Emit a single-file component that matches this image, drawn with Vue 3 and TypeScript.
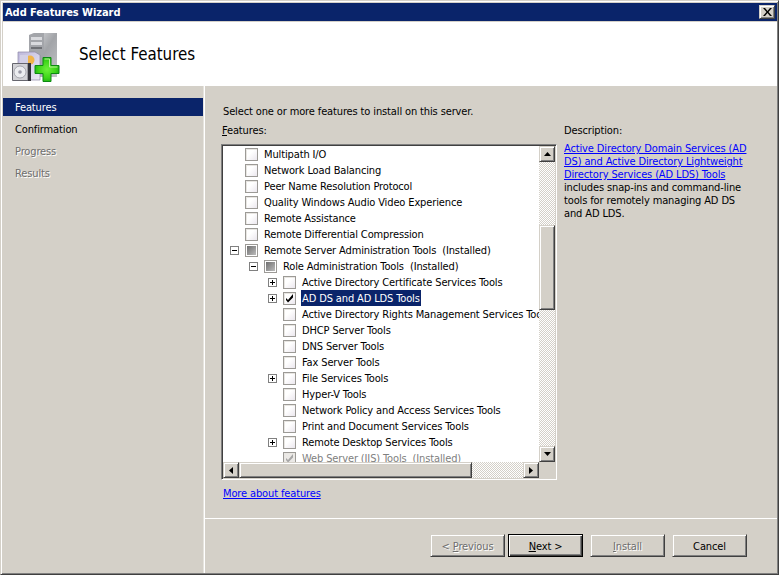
<script setup lang="ts">
interface Row {
  level: number;
  text: string;
  expander?: '+' | '-';
  state?: 'none' | 'mixed' | 'checked' | 'locked';
  selected?: boolean;
}
const rows: Row[] = [
  { level: 0, text: 'Multipath I/O' },
  { level: 0, text: 'Network Load Balancing' },
  { level: 0, text: 'Peer Name Resolution Protocol' },
  { level: 0, text: 'Quality Windows Audio Video Experience' },
  { level: 0, text: 'Remote Assistance' },
  { level: 0, text: 'Remote Differential Compression' },
  { level: 0, text: 'Remote Server Administration Tools  (Installed)', expander: '-', state: 'mixed' },
  { level: 1, text: 'Role Administration Tools  (Installed)', expander: '-', state: 'mixed' },
  { level: 2, text: 'Active Directory Certificate Services Tools', expander: '+' },
  { level: 2, text: 'AD DS and AD LDS Tools', expander: '+', state: 'checked', selected: true },
  { level: 2, text: 'Active Directory Rights Management Services Tools' },
  { level: 2, text: 'DHCP Server Tools' },
  { level: 2, text: 'DNS Server Tools' },
  { level: 2, text: 'Fax Server Tools' },
  { level: 2, text: 'File Services Tools', expander: '+' },
  { level: 2, text: 'Hyper-V Tools' },
  { level: 2, text: 'Network Policy and Access Services Tools' },
  { level: 2, text: 'Print and Document Services Tools' },
  { level: 2, text: 'Remote Desktop Services Tools', expander: '+' },
  { level: 2, text: 'Web Server (IIS) Tools  (Installed)', state: 'locked' },
];
const steps = [
  { name: 'Features', cls: 'active' },
  { name: 'Confirmation', cls: '' },
  { name: 'Progress', cls: 'off' },
  { name: 'Results', cls: 'off' },
];
</script>

<template>
  <div class="window">
    <div class="titlebar">
      <span class="title-text">Add Features Wizard</span>
      <button class="close raised" aria-label="Close">
        <svg width="9" height="8" viewBox="0 0 9 8"><path class="glyph" d="M0 0h2l2.500 3 2.500-3h2L5.500 4 9 8H7L4.500 5 2 8H0l3.500-4z" /></svg>
      </button>
    </div>
    <header class="banner">
      <svg class="logo" width="50" height="50" viewBox="0 0 50 50">
        <defs>
          <linearGradient id="srv" x1="0" x2="1" y1="0" y2="1">
            <stop offset="0" stop-color="#e4e5e8" />
            <stop offset="0.5" stop-color="#a2a4a8" />
            <stop offset="1" stop-color="#c4c5c8" />
          </linearGradient>
          <linearGradient id="box" x1="0" x2="1" y1="0" y2="1">
            <stop offset="0" stop-color="#bdb8dc" />
            <stop offset="1" stop-color="#ece9f4" />
          </linearGradient>
          <radialGradient id="plus" cx="0.5" cy="0.5" r="0.6">
            <stop offset="0" stop-color="#6cf03a" />
            <stop offset="0.6" stop-color="#3cd418" />
            <stop offset="1" stop-color="#16a414" />
          </radialGradient>
        </defs>
        <path d="M17 3l5-2h23v44H22l-5-3z" fill="url(#srv)" />
        <path d="M17 3l5-2h10v42H22l-5-3z" fill="#a3a5aa" />
        <path d="M19 5h11v3H19zM19 10h11v3H19z" fill="#d9dade" />
        <path d="M19 15h11v2H19z" fill="#6e7075" />
        <path d="M6 20h17l5 3v25H6z" fill="url(#box)" stroke="#8c88a8" stroke-width=".7" />
        <circle cx="18" cy="28" r="4.500" fill="#f0b54a" />
        <path d="M8 23h8v8H8z" fill="#d3d0e6" />
        <path d="M.5 31.500h15.500v17H.5z" fill="#d2d2d6" stroke="#66666e" />
        <path d="M16 31h3v18h-3z" fill="#33333a" />
        <circle cx="8" cy="40" r="6" fill="#ecedf0" stroke="#8d8d96" stroke-width=".7" />
        <circle cx="8" cy="40" r="1.800" fill="#9a9aa6" />
        <path d="M31 25.500h8v8h8v8h-8v8h-8v-8h-8v-8h8z" fill="url(#plus)" stroke="#0c8a12" />
        <path d="M32.500 27h5v8h8" fill="none" stroke="#b8f598" />
      </svg>
      <h1 class="banner-title">Select Features</h1>
    </header>
    <div class="body">
      <nav class="sidebar">
        <div v-for="s in steps" :key="s.name" class="step" :class="s.cls">{{ s.name }}</div>
      </nav>
      <main class="main">
        <div class="content">
          <div class="picker">
            <p class="lead">Select one or more features to install on this server.</p>
            <p class="caption"><u>F</u>eatures:</p>
            <div class="tree">
              <div class="rows">
                <div v-for="r in rows" :key="r.text" class="row" :style="{ paddingLeft: 7 + r.level * 19 + 'px' }">
                  <span class="exp-slot">
                    <span v-if="r.expander" class="expander">
                      <i class="h"></i><i v-if="r.expander === '+'" class="v"></i>
                    </span>
                  </span>
                  <span class="check" :class="r.state">
                    <svg v-if="r.state === 'checked' || r.state === 'locked'" width="9" height="9" viewBox="0 0 9 9">
                      <path d="M1 4l2 2L8 0v3.500L3 8.500 1 6z" />
                    </svg>
                  </span>
                  <span class="label" :class="{ selected: r.selected, locked: r.state === 'locked' }">{{ r.text }}</span>
                </div>
              </div>
              <div class="vbar">
                <button class="sb raised" aria-label="Up"><svg width="7" height="4" viewBox="0 0 7 4"><path class="glyph" d="M3.500 0L7 4H0z" /></svg></button>
                <div class="track track-top"></div>
                <div class="thumb-v raised"></div>
                <div class="track track-fill"></div>
                <button class="sb raised" aria-label="Down"><svg width="7" height="4" viewBox="0 0 7 4"><path class="glyph" d="M0 0h7L3.500 4z" /></svg></button>
              </div>
              <div class="hbar">
                <button class="sb raised" aria-label="Left"><svg width="4" height="7" viewBox="0 0 4 7"><path class="glyph" d="M4 0v7L0 3.500z" /></svg></button>
                <div class="thumb-h raised"></div>
                <div class="track track-fill"></div>
                <button class="sb raised" aria-label="Right"><svg width="4" height="7" viewBox="0 0 4 7"><path class="glyph" d="M0 0l4 3.500L0 7z" /></svg></button>
              </div>
              <div class="corner"></div>
            </div>
            <a class="link more" href="#">More about features</a>
          </div>
          <aside class="desc">
            <p class="desc-head">Description:</p>
            <p class="desc-text">
              <a class="link" href="#">Active Directory Domain Services (AD<br />DS) and Active Directory Lightweight<br />Directory Services (AD LDS) Tools</a><br />
              includes snap-ins and command-line<br />tools for remotely managing AD DS<br />and AD LDS.
            </p>
          </aside>
        </div>
        <footer class="footer">
          <button class="btn raised disabled"><span>&lt; <u>P</u>revious</span></button>
          <button class="btn raised default"><span><u>N</u>ext &gt;</span></button>
          <button class="btn raised disabled gap"><span><u>I</u>nstall</span></button>
          <button class="btn raised gap"><span>Cancel</span></button>
        </footer>
      </main>
    </div>
  </div>
</template>

<style>
html, body { margin: 0; background: #d4d0c8; }
</style>

<style scoped>
.window {
  box-sizing: border-box;
  width: 779px;
  height: 575px;
  display: flex;
  flex-direction: column;
  padding: 2px 1px 1px 2px;
  background: #d4d0c8;
  border: 1px solid;
  border-color: #d4d0c8 #404040 #404040 #d4d0c8;
  box-shadow: inset 1px 1px 0 #fff, inset -1px -1px 0 #808080;
  font: 11px "DejaVu Sans Condensed", "Liberation Sans", Arial, sans-serif;
  letter-spacing: -0.13px;
  color: #000;
  overflow: hidden;
}
p, h1 { margin: 0; font-weight: normal; }
button { font: inherit; letter-spacing: inherit; padding: 0; color: inherit; background: #d4d0c8; display: flex; align-items: center; justify-content: center; }
button span { padding-top: 1px; }
.raised {
  box-sizing: border-box;
  background: #d4d0c8;
  border: 1px solid;
  border-color: #d4d0c8 #404040 #404040 #d4d0c8;
  box-shadow: inset 1px 1px 0 #fff, inset -1px -1px 0 #808080;
}
.glyph { fill: #000; }
.titlebar {
  height: 18px;
  flex: none;
  background: #0a246a;
  display: flex;
  align-items: center;
  justify-content: space-between;
  padding: 0 2px;
  color: #fff;
  font-weight: bold;
  letter-spacing: -0.05px;
}
.close { width: 16px; height: 14px; }
.banner {
  flex: none;
  height: 64px;
  margin-top: 1px;
  background: #fff;
  display: flex;
  align-items: center;
}
.logo { margin: 5px 0 0 9px; flex: none; }
.banner-title { font-size: 16.800px; margin-left: 17px; letter-spacing: 0; }
.body { flex: 1; display: flex; min-height: 0; }
.sidebar {
  width: 200px;
  flex: none;
  padding-top: 12px;
  box-sizing: border-box;
  display: flex;
  flex-direction: column;
  gap: 4px;
}
.step { height: 18px; line-height: 20px; padding-left: 12px; }
.step.active { background: #0a246a; color: #fff; }
.step.off { color: #6e6e6e; text-shadow: 1px 1px 0 #fff; }
.main {
  flex: 1;
  display: flex;
  flex-direction: column;
  min-width: 0;
  border-left: 1px solid #fff;
  margin-left: 1px;
  box-shadow: -1px 0 0 #e6e4de;
}
.content {
  height: 433px;
  flex: none;
  box-sizing: border-box;
  padding: 19px 0 0 16px;
  display: flex;
  border-bottom: 1px solid #fff;
}
.picker { width: 336px; flex: none; }
.lead { line-height: 14px; margin-left: 2px; }
.caption { line-height: 14px; margin: 5px 0 0 1px; }
.tree {
  box-sizing: border-box;
  margin-top: 6px;
  width: 336px;
  height: 336px;
  border: 1px solid;
  border-color: #808080 #fff #fff #808080;
  padding: 1px;
  box-shadow: inset 1px 1px 0 #404040, inset -1px -1px 0 #d4d0c8;
  background: #fff;
  display: grid;
  grid-template-columns: 316px 16px;
  grid-template-rows: 316px 16px;
}
.rows { overflow: hidden; }
.row { height: 16px; display: flex; align-items: center; white-space: pre; box-sizing: border-box; }
.exp-slot { width: 15px; flex: none; display: flex; }
.expander {
  position: relative;
  box-sizing: border-box;
  width: 9px;
  height: 9px;
  border: 1px solid #808080;
  background: #fff;
}
.expander .h { position: absolute; left: 1px; top: 3px; width: 5px; height: 1px; background: #000; }
.expander .v { position: absolute; left: 3px; top: 1px; width: 1px; height: 5px; background: #000; }
.check {
  box-sizing: border-box;
  flex: none;
  width: 13px;
  height: 13px;
  border: 1px solid #9c9a96;
  background: linear-gradient(135deg, #fff 40%, #ebe7ee);
  box-shadow: inset 1px 1px 0 #e8e6e2;
  display: flex;
  align-items: center;
  justify-content: center;
}
.check.mixed { background: linear-gradient(135deg, #666 0%, #c4c4c4 100%); box-shadow: inset 0 0 0 1px #fff; }
.check.checked path { fill: #000; }
.check.locked { background: #ebe9e6; }
.check.locked path { fill: #a6a6a6; }
.label { margin-left: 5px; padding: 0 1px; height: 16px; line-height: 18px; }
.label.selected { background: #0a246a; color: #fff; }
.label.locked { color: #808080; }
.vbar { display: flex; flex-direction: column; }
.hbar { display: flex; }
.sb { width: 16px; height: 16px; flex: none; }
.track { background: repeating-conic-gradient(#fff 0 25%, #d4d0c8 0 50%) 0 0 / 2px 2px; }
.track-top { height: 63px; flex: none; }
.track-fill { flex: 1; }
.thumb-v { height: 85px; flex: none; }
.thumb-h { width: 233px; flex: none; }
.corner { background: #d4d0c8; }
.link { color: #0000ff; text-decoration: underline; }
.more { display: block; margin: 7px 0 0 2px; line-height: 14px; }
.desc { margin: 19px 0 0 7px; flex: 1; min-width: 0; }
.desc-head { line-height: 14px; }
.desc-text { margin-top: 4px; line-height: 13px; white-space: nowrap; }
.footer { flex: 1; display: flex; padding: 15px 0 0 225px; }
.btn { width: 75px; height: 23px; }
.btn + .btn { margin-left: 3px; }
.btn.gap { margin-left: 7px; }
.btn.disabled { color: #6e6e6e; text-shadow: 1px 1px 0 #fff; }
.btn.default { border-color: #000; box-shadow: inset 1px 1px 0 #fff, inset -1px -1px 0 #404040, inset -2px -2px 0 #808080; }
</style>
